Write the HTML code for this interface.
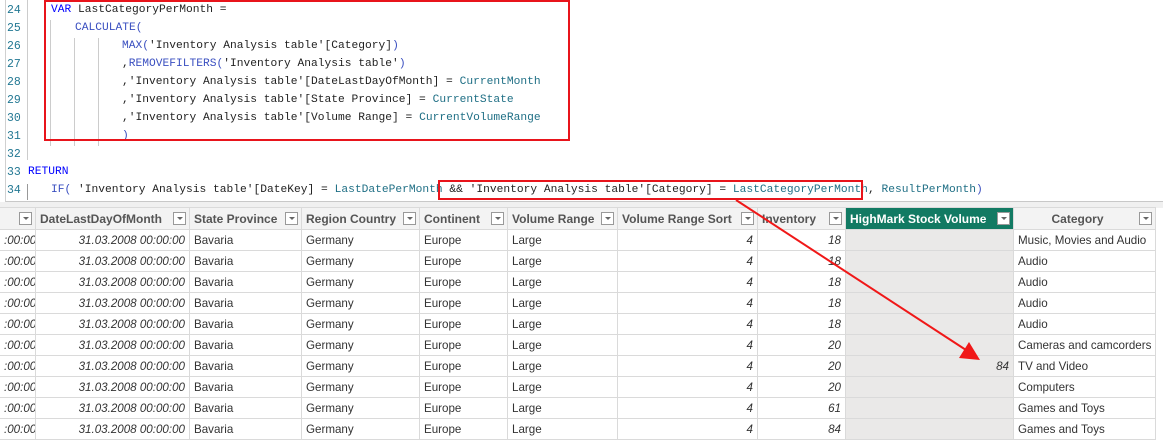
<!DOCTYPE html>
<html><head><meta charset="utf-8"><style>
*{margin:0;padding:0;box-sizing:border-box}
body{width:1163px;height:428px;overflow:hidden;background:#fff;position:relative;font-family:"Liberation Sans",sans-serif}
.code{position:absolute;left:5px;top:0;width:1158px;height:202px;border-left:1px solid #d0d0d0;border-bottom:1px solid #c8c8c8;background:#fff}
.ln{position:absolute;left:1px;font:11.5px "Liberation Mono",monospace;color:#237893}
.cl{position:absolute;font:11.25px "Liberation Mono",monospace;color:#222;white-space:pre}
.k{color:#0000ff}.f{color:#3a4fc0}.c{color:#1f6f85}
.gl{position:absolute;width:1px;background:#ccc}
.band{position:absolute;left:0;top:202px;width:1163px;height:6px;background:#f0f0f0}
table{position:absolute;left:-1px;top:207px;border-collapse:collapse;font-size:11.6px;table-layout:fixed;width:1176px}
td,th{border:1px solid #dadada;height:21px;padding:0 4px;white-space:nowrap;overflow:hidden;color:#333}
th{height:22px;font-weight:bold;color:#555;text-align:left;background:#f3f3f3;position:relative;padding-right:18px;font-size:12px}
th i{position:absolute;right:3px;top:4px;width:13px;height:13px;border:1px solid #999;background:#fff}
th i:after{content:"";position:absolute;left:3px;top:4px;border:3px solid transparent;border-top:3px solid #666}
td.r{text-align:right;font-style:italic}
td.h{background:#eae9e8}
th.g{background:#127a63;color:#fff}
</style></head><body>
<div class="code">
<div class="ln" style="top:4px">24</div><div class="ln" style="top:22px">25</div><div class="ln" style="top:40px">26</div><div class="ln" style="top:58px">27</div><div class="ln" style="top:76px">28</div><div class="ln" style="top:94px">29</div><div class="ln" style="top:112px">30</div><div class="ln" style="top:130px">31</div><div class="ln" style="top:148px">32</div><div class="ln" style="top:166px">33</div><div class="ln" style="top:184px">34</div>
<div class="gl" style="left:21px;top:0;height:160px"></div>
<div class="gl" style="left:44px;top:20px;height:126px"></div>
<div class="gl" style="left:68px;top:38px;height:108px"></div>
<div class="gl" style="left:92px;top:38px;height:108px"></div>
<div class="gl" style="left:21px;top:184px;height:16px;background:#999"></div>
<div class="cl" style="left:45px;top:4px"><span class="k">VAR</span> LastCategoryPerMonth =</div>
<div class="cl" style="left:69px;top:22px"><span class="f">CALCULATE(</span></div>
<div class="cl" style="left:116px;top:40px"><span class="f">MAX(</span>'Inventory Analysis table'[Category]<span class="f">)</span></div>
<div class="cl" style="left:116px;top:58px">,<span class="f">REMOVEFILTERS(</span>'Inventory Analysis table'<span class="f">)</span></div>
<div class="cl" style="left:116px;top:76px">,'Inventory Analysis table'[DateLastDayOfMonth] = <span class="c">CurrentMonth</span></div>
<div class="cl" style="left:116px;top:94px">,'Inventory Analysis table'[State Province] = <span class="c">CurrentState</span></div>
<div class="cl" style="left:116px;top:112px">,'Inventory Analysis table'[Volume Range] = <span class="c">CurrentVolumeRange</span></div>
<div class="cl" style="left:116px;top:130px"><span class="f">)</span></div>
<div class="cl" style="left:22px;top:166px"><span class="k">RETURN</span></div>
<div class="cl" style="left:45px;top:184px"><span class="f">IF(</span> 'Inventory Analysis table'[DateKey] = <span class="c">LastDatePerMonth</span> &amp;&amp; 'Inventory Analysis table'[Category] = <span class="c">LastCategoryPerMonth</span>, <span class="c">ResultPerMonth</span><span class="f">)</span></div>
</div>
<div class="band"></div>
<table>
<colgroup><col style="width:36px"><col style="width:154px"><col style="width:112px"><col style="width:118px"><col style="width:88px"><col style="width:110px"><col style="width:140px"><col style="width:88px"><col style="width:168px"><col style="width:142px"><col style="width:20px"></colgroup>
<tr><th><i></i></th><th>DateLastDayOfMonth<i></i></th><th>State Province<i></i></th><th>Region Country<i></i></th><th>Continent<i></i></th><th>Volume Range<i></i></th><th>Volume Range Sort<i></i></th><th>Inventory<i></i></th><th class="g">HighMark Stock Volume<i></i></th><th style="text-align:center">Category<i></i></th><th style="background:#fff;border:none"></th></tr>
<tr><td class="r">:00:00</td><td class="r">31.03.2008 00:00:00</td><td>Bavaria</td><td>Germany</td><td>Europe</td><td>Large</td><td class="r">4</td><td class="r">18</td><td class="h"></td><td>Music, Movies and Audio</td><td style="border:none"></td></tr>
<tr><td class="r">:00:00</td><td class="r">31.03.2008 00:00:00</td><td>Bavaria</td><td>Germany</td><td>Europe</td><td>Large</td><td class="r">4</td><td class="r">18</td><td class="h"></td><td>Audio</td><td style="border:none"></td></tr>
<tr><td class="r">:00:00</td><td class="r">31.03.2008 00:00:00</td><td>Bavaria</td><td>Germany</td><td>Europe</td><td>Large</td><td class="r">4</td><td class="r">18</td><td class="h"></td><td>Audio</td><td style="border:none"></td></tr>
<tr><td class="r">:00:00</td><td class="r">31.03.2008 00:00:00</td><td>Bavaria</td><td>Germany</td><td>Europe</td><td>Large</td><td class="r">4</td><td class="r">18</td><td class="h"></td><td>Audio</td><td style="border:none"></td></tr>
<tr><td class="r">:00:00</td><td class="r">31.03.2008 00:00:00</td><td>Bavaria</td><td>Germany</td><td>Europe</td><td>Large</td><td class="r">4</td><td class="r">18</td><td class="h"></td><td>Audio</td><td style="border:none"></td></tr>
<tr><td class="r">:00:00</td><td class="r">31.03.2008 00:00:00</td><td>Bavaria</td><td>Germany</td><td>Europe</td><td>Large</td><td class="r">4</td><td class="r">20</td><td class="h"></td><td>Cameras and camcorders</td><td style="border:none"></td></tr>
<tr><td class="r">:00:00</td><td class="r">31.03.2008 00:00:00</td><td>Bavaria</td><td>Germany</td><td>Europe</td><td>Large</td><td class="r">4</td><td class="r">20</td><td class="h r">84</td><td>TV and Video</td><td style="border:none"></td></tr>
<tr><td class="r">:00:00</td><td class="r">31.03.2008 00:00:00</td><td>Bavaria</td><td>Germany</td><td>Europe</td><td>Large</td><td class="r">4</td><td class="r">20</td><td class="h"></td><td>Computers</td><td style="border:none"></td></tr>
<tr><td class="r">:00:00</td><td class="r">31.03.2008 00:00:00</td><td>Bavaria</td><td>Germany</td><td>Europe</td><td>Large</td><td class="r">4</td><td class="r">61</td><td class="h"></td><td>Games and Toys</td><td style="border:none"></td></tr>
<tr><td class="r">:00:00</td><td class="r">31.03.2008 00:00:00</td><td>Bavaria</td><td>Germany</td><td>Europe</td><td>Large</td><td class="r">4</td><td class="r">84</td><td class="h"></td><td>Games and Toys</td><td style="border:none"></td></tr>
</table>
<svg style="position:absolute;left:0;top:0" width="1163" height="428">
<rect x="45" y="1" width="524" height="139" fill="none" stroke="#e8141b" stroke-width="2"/>
<rect x="439" y="181" width="423" height="18" fill="none" stroke="#e8141b" stroke-width="2"/>
<line x1="736" y1="200" x2="966" y2="350" stroke="#f01818" stroke-width="2"/>
<polygon points="980,360 959,358 969,342" fill="#f01818"/>
</svg>
</body></html>
